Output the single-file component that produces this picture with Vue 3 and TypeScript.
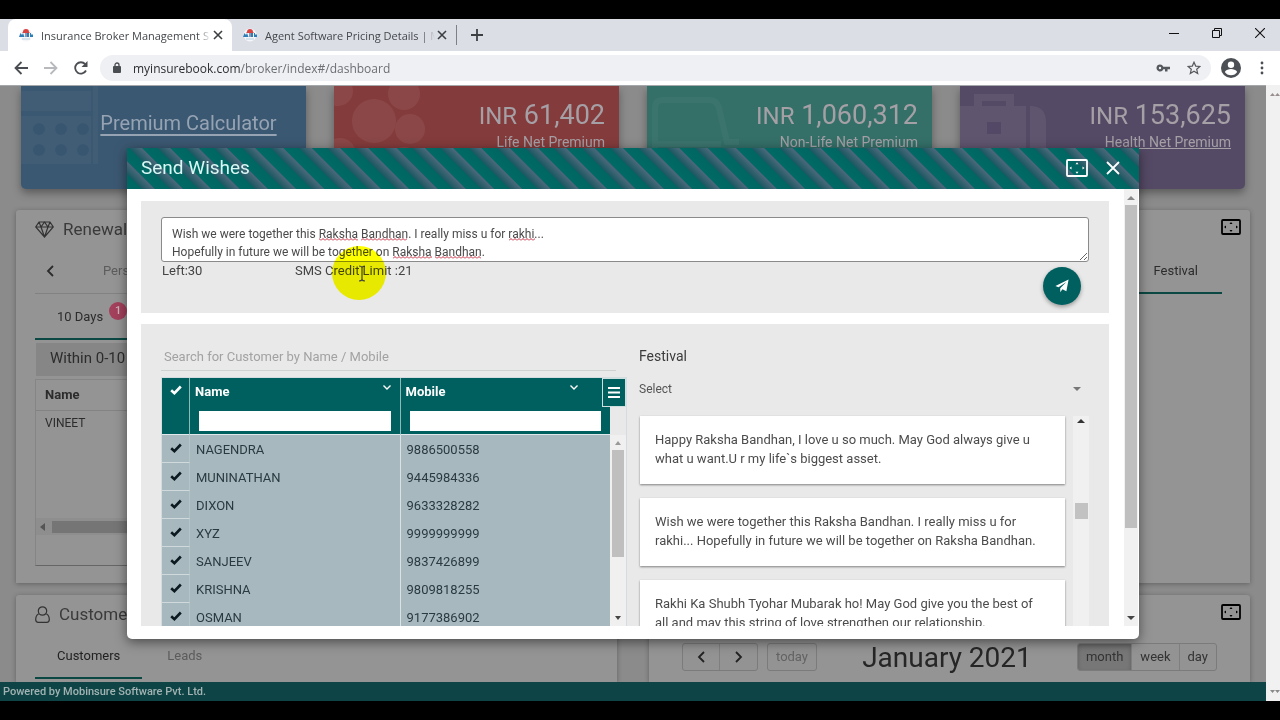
<script setup lang="ts">
import { ref } from 'vue'

interface Stat { kind: string; amount: string; label: string; link: boolean }
interface Customer { name: string; mobile: string }

const stats: Stat[] = [
  { kind: 'life', amount: '61,402', label: 'Life Net Premium', link: false },
  { kind: 'nonlife', amount: '1,060,312', label: 'Non-Life Net Premium', link: false },
  { kind: 'health', amount: '153,625', label: 'Health Net Premium', link: true },
]

const browserTabs = [
  { title: 'Insurance Broker Management S', active: true },
  { title: 'Agent Software Pricing Details | M', active: false },
]

const customers: Customer[] = [
  { name: 'NAGENDRA', mobile: '9886500558' },
  { name: 'MUNINATHAN', mobile: '9445984336' },
  { name: 'DIXON', mobile: '9633328282' },
  { name: 'XYZ', mobile: '9999999999' },
  { name: 'SANJEEV', mobile: '9837426899' },
  { name: 'KRISHNA', mobile: '9809818255' },
  { name: 'OSMAN', mobile: '9177386902' },
]

const wishes = [
  'Happy Raksha Bandhan, I love u so much. May God always give u what u want.U r my life`s biggest asset.',
  'Wish we were together this Raksha Bandhan. I really miss u for rakhi... Hopefully in future we will be together on Raksha Bandhan.',
  'Rakhi Ka Shubh Tyohar Mubarak ho! May God give you the best of all and may this string of love strengthen our relationship.',
]

const message = ref(
  'Wish we were together this Raksha Bandhan. I really miss u for rakhi...\nHopefully in future we will be together on Raksha Bandhan.',
)

// Words the spell checker flags: start, line top and width inside the text box
const misspelt = [
  { x: 158, y: 19, w: 39 },
  { x: 200, y: 19, w: 46 },
  { x: 348, y: 19, w: 26 },
  { x: 232, y: 37, w: 39 },
  { x: 274, y: 37, w: 46 },
]

const search = ref('')
const nameFilter = ref('')
const mobileFilter = ref('')
const festival = ref('Select')
</script>

<template>
  <div class="screen">
    <header class="tabstrip">
      <div v-for="tab in browserTabs" :key="tab.title" class="btab" :class="{ on: tab.active }">
        <svg class="favicon" viewBox="0 0 14 14">
          <circle cx="7" cy="7" r="6.5" fill="#f4f6fa" />
          <path d="M4 4a3 3 0 0 1 6 0l1 1H3z" fill="#d8433f" />
          <path d="M0 9l1.500-4 1.500 2 1-2 1.500 4zM8 5h2v4H8zM11 5h1v1.500h2V9h-3z" fill="#2f7fb5" />
          <path d="M6 5h2v4H6z" fill="#8b98b4" />
          <path d="M3 11h8" stroke="#b8d4e0" />
        </svg>
        <span class="btitle">{{ tab.title }}</span>
        <button class="plain" aria-label="Close tab">
          <svg width="10" height="10" viewBox="0 0 10 10"><path d="M1 1l8 8M9 1l-8 8" stroke="#3c4043" stroke-width="1.6" /></svg>
        </button>
      </div>
      <i class="tabsep"></i>
      <button class="plain newtab" aria-label="New tab">
        <svg width="12" height="12" viewBox="0 0 12 12"><path d="M6 0v12M0 6h12" stroke="#3c4043" stroke-width="1.8" /></svg>
      </button>
      <div class="winbtns">
        <button class="plain" aria-label="Minimize"><svg width="10" height="10" viewBox="0 0 10 10"><path d="M0 5.500h10" stroke="#111" /></svg></button>
        <button class="plain" aria-label="Restore"><svg width="10" height="10" viewBox="0 0 10 10" fill="none" stroke="#111"><path d="M.5 2.500h7v7h-7zM2.500 2.500v-2h7v7h-2" /></svg></button>
        <button class="plain" aria-label="Close window"><svg width="10" height="10" viewBox="0 0 10 10"><path d="M0 0l10 10M10 0L0 10" stroke="#111" stroke-width="1.100" /></svg></button>
      </div>
    </header>

    <nav class="toolbar">
      <button class="plain" aria-label="Back"><svg width="14" height="14" viewBox="0 0 14 14" fill="none" stroke="#4a4d51" stroke-width="1.800"><path d="M14 7H1.500M7.500 1l-6 6 6 6" /></svg></button>
      <button class="plain" aria-label="Forward"><svg width="14" height="14" viewBox="0 0 14 14" fill="none" stroke="#b7b9bc" stroke-width="1.800"><path d="M0 7h12.500M6.500 1l6 6-6 6" /></svg></button>
      <button class="plain" aria-label="Reload"><svg width="14" height="14" viewBox="0 0 14 14"><path d="M12 9.500A5.700 5.700 0 1 1 11.200 3.200" fill="none" stroke="#4a4d51" stroke-width="1.800" /><path d="M13.500 0v6h-6z" fill="#4a4d51" /></svg></button>
      <div class="omni">
        <svg width="8" height="12" viewBox="0 0 8 12"><rect y="4" width="8" height="7" rx="1" fill="#4a4d51" /><path d="M2 4.500V3a2 2 0 0 1 4 0v1.500" fill="none" stroke="#4a4d51" stroke-width="1.300" /></svg>
        <span class="url"><b>myinsurebook.com</b>/broker/index#/dashboard</span>
        <svg class="key" width="14" height="8" viewBox="0 0 14 8"><path d="M4 .5a3.500 3.500 0 1 0 3.300 4.700H9V7.500h2.500V5.200H14V2.800H7.300A3.500 3.500 0 0 0 4 .5zm0 2.300a1.200 1.200 0 1 1 0 2.400 1.200 1.200 0 0 1 0-2.400z" fill="#55585c" fill-rule="evenodd" /></svg>
        <svg width="14" height="14" viewBox="0 0 14 14"><path d="M7 1.200l1.700 3.900 4.200.4-3.200 2.800 1 4.200L7 10.300l-3.700 2.200 1-4.200L1.100 5.500l4.200-.4z" fill="none" stroke="#55585c" stroke-width="1.200" /></svg>
      </div>
      <svg class="avatar" width="20" height="20" viewBox="0 0 20 20"><circle cx="10" cy="10" r="10" fill="#4c4f53" /><circle cx="10" cy="6.800" r="3.200" fill="#fff" /><path d="M3.800 14c1.200-2.200 4-3 6.200-3s5 .8 6.200 3c-1.300 2-3.600 3.300-6.200 3.300S5.100 16 3.800 14z" fill="#fff" /></svg>
      <button class="plain" aria-label="Menu"><svg width="4" height="14" viewBox="0 0 4 14" fill="#4a4d51"><circle cx="2" cy="2" r="1.400" /><circle cx="2" cy="7" r="1.400" /><circle cx="2" cy="12" r="1.400" /></svg></button>
    </nav>

    <div class="viewport">
      <main class="page">
        <section class="stats">
          <article class="stat calc">
            <svg class="ghost" width="78" height="80" viewBox="0 0 78 80" fill="#fff">
              <path d="M0 5h70v20H0zM72 0h5v78h-5zM0 30h70v48H0z" opacity=".5" />
              <g fill="#23405a"><circle cx="18" cy="43" r="6" /><circle cx="40" cy="43" r="6" /><circle cx="62" cy="43" r="6" /><circle cx="18" cy="64" r="6" /><circle cx="40" cy="64" r="6" /><circle cx="62" cy="64" r="6" /></g>
            </svg>
            <a href="#calculator" class="calclink">Premium Calculator</a>
          </article>
          <article v-for="s in stats" :key="s.kind" class="stat" :class="s.kind">
            <svg v-if="s.kind === 'life'" class="ghost" width="92" height="80" viewBox="0 0 92 80" fill="#fff"><circle cx="40" cy="35" r="22" /><circle cx="70" cy="8" r="16" /><circle cx="76" cy="43" r="15" /><circle cx="4" cy="5" r="15" /><circle cx="6" cy="68" r="16" /><circle cx="70" cy="76" r="15" /></svg>
            <svg v-else-if="s.kind === 'nonlife'" class="ghost faint" width="92" height="80" viewBox="0 0 92 80" fill="none" stroke="#fff" stroke-width="6"><path d="M8 64V22q0-8 8-8h46q8 0 10 8l8 34h12M8 58h66" /></svg>
            <svg v-else class="ghost" width="92" height="80" viewBox="0 0 92 80"><path d="M14 20V8h40v12h12v60H0V20zm8-5v5h24v-5zM70 20q16 0 16 16v44H70z" fill="#fff" fill-rule="evenodd" /><path d="M27 36h14v12H27z" fill="#40355a" /></svg>
            <p class="amount"><small>INR</small> {{ s.amount }}</p>
            <a v-if="s.link" href="#health" class="caption">{{ s.label }}</a>
            <span v-else class="caption">{{ s.label }}</span>
          </article>
        </section>

        <section class="panels">
          <article class="panel tall">
            <h2>
              <svg width="19" height="17" viewBox="0 0 19 17" fill="none" stroke="#333" stroke-width="1.200"><path d="M4 1h11l3.300 5-8.800 10L.7 6zM.7 6h17.600M6 6l3.500 10L13 6M4 1l2 5 3.500-5L13 6l2-5" /></svg>
              Renewal
            </h2>
            <div class="carousel">
              <button class="plain" aria-label="Previous"><svg width="8" height="12" viewBox="0 0 8 12"><path d="M7 1L2 6l5 5" fill="none" stroke="#2b2b2b" stroke-width="1.800" /></svg></button>
              <span>Personal</span>
            </div>
            <div class="days"><span>10 Days</span><b>1</b></div>
            <p class="within">Within 0-10 Days</p>
            <div class="mini">
              <table>
                <thead><tr><th>Name</th></tr></thead>
                <tbody><tr><td>VINEET</td></tr></tbody>
              </table>
              <div class="hscroll"><svg width="5" height="8" viewBox="0 0 5 8"><path d="M5 0v8L0 4z" fill="#555" /></svg><i></i></div>
            </div>
          </article>

          <article class="panel tall right">
            <svg class="expand" width="20" height="16" viewBox="0 0 20 16"><rect x="1" y="1" width="18" height="14" rx="1" fill="none" stroke="#000" stroke-width="1.800" /><path d="M8.500 5L10 3l1.500 2zM8.500 11L10 13l1.500-2zM5 6.500L3 8l2 1.500zM15 6.500L17 8l-2 1.500z" /></svg>
            <div class="festtab"><span>Festival</span></div>
          </article>

          <article class="panel">
            <h2>
              <svg width="15" height="17" viewBox="0 0 15 17" fill="none" stroke="#333" stroke-width="1.200"><circle cx="7.500" cy="5" r="4.200" /><path d="M3.800 7.800C1.500 9 .7 11 .7 13.500c0 2 1 2.800 2.600 2.800h8.400c1.600 0 2.600-.8 2.600-2.800 0-2.500-.8-4.500-3.100-5.700" /></svg>
              Customers
            </h2>
            <div class="ctabs"><button class="plain on">Customers</button><button class="plain">Leads</button></div>
          </article>

          <article class="panel right">
            <svg class="expand" width="20" height="16" viewBox="0 0 20 16"><rect x="1" y="1" width="18" height="14" rx="1" fill="none" stroke="#000" stroke-width="1.800" /><path d="M8.500 5L10 3l1.500 2zM8.500 11L10 13l1.500-2zM5 6.500L3 8l2 1.500zM15 6.500L17 8l-2 1.500z" /></svg>
            <div class="calbar">
              <div class="leftset">
                <div class="group nav">
                  <button aria-label="Previous month"><svg width="8" height="12" viewBox="0 0 8 12"><path d="M7 1L2 6l5 5" fill="none" stroke="#222" stroke-width="1.800" /></svg></button>
                  <button aria-label="Next month"><svg width="8" height="12" viewBox="0 0 8 12"><path d="M1 1l5 5-5 5" fill="none" stroke="#222" stroke-width="1.800" /></svg></button>
                </div>
                <div class="group dim"><button>today</button></div>
              </div>
              <h3>January 2021</h3>
              <div class="group views"><button class="on">month</button><button>week</button><button>day</button></div>
            </div>
          </article>
        </section>

        <footer>Powered by Mobinsure Software Pvt. Ltd.</footer>

        <div class="overlay">
          <div class="modal" role="dialog" aria-labelledby="dlg-title">
            <header class="mhead">
              <h1 id="dlg-title">Send Wishes</h1>
              <button class="plain" aria-label="Full screen"><svg width="22" height="18" viewBox="0 0 22 18"><rect x="1" y="1" width="20" height="16" rx="1" fill="none" stroke="#fff" stroke-width="1.800" /><path d="M9.500 5.300L11 3.300l1.500 2zM9.500 12.700l1.500 2 1.500-2zM5.500 7.500L3.500 9l2 1.500zM16.500 7.500l2 1.500-2 1.500z" fill="#fff" /></svg></button>
              <button class="plain" aria-label="Close"><svg width="14" height="14" viewBox="0 0 14 14"><path d="M1 1l12 12M13 1L1 13" stroke="#fff" stroke-width="1.800" /></svg></button>
            </header>
            <div class="mbody">
              <div class="mcontent">
                <section class="box compose">
                  <div class="msgwrap">
                    <textarea v-model="message" rows="2" aria-label="Message" spellcheck="false"></textarea>
                    <svg class="squiggles" width="100%" height="100%">
                      <defs><pattern id="wave" width="4" height="3" patternUnits="userSpaceOnUse"><path d="M0 2.500L2 .5l2 2" fill="none" stroke="#c2283c" /></pattern></defs>
                      <rect v-for="(m, i) in misspelt" :key="i" :x="m.x" :y="m.y + 2" :width="m.w" height="3" fill="url(#wave)" />
                    </svg>
                  </div>
                  <div class="counts">
                    <span class="left">Left:30</span>
                    <span class="credit">SMS Credit Limit :21
                      <svg class="pointer" width="54" height="54" viewBox="0 0 54 54"><circle cx="27" cy="27" r="27" fill="#fdff00" /><path d="M27 20q2.500 0 3 1.500.5-1.500 3-1.500M27 35q2.500 0 3-1.500.5 1.500 3 1.500M30 21.500v12" fill="none" stroke="#444" stroke-width="1.200" /></svg>
                    </span>
                  </div>
                  <button class="send" aria-label="Send"><svg width="14" height="14" viewBox="0 0 16 15"><path d="M15.500 0L13 13.500 8.500 11.200 6 14.500V10L13 3 4 9 .5 7.500z" fill="#fff" /></svg></button>
                </section>

                <section class="box chooser">
                  <div class="people">
                    <input v-model="search" class="search" type="text" placeholder="Search for Customer by Name / Mobile" aria-label="Search for customer" />
                    <div class="grid">
                      <table class="gtable">
                        <colgroup><col class="c0" /><col /><col /></colgroup>
                        <thead>
                          <tr>
                            <th class="tick"><svg width="12" height="10" viewBox="0 0 12 10"><path d="M1.200 5.200L4.400 8.200 10.800 1.500" fill="none" stroke="#fff" stroke-width="2.600" /></svg></th>
                            <th>
                              <div class="thl">Name<svg width="8" height="5" viewBox="0 0 8 5"><path d="M.5.500L4 4 7.500.5" fill="none" stroke="#fff" stroke-width="1.400" /></svg></div>
                              <input v-model="nameFilter" type="text" aria-label="Filter name" />
                            </th>
                            <th>
                              <div class="thl wide">Mobile<svg width="8" height="5" viewBox="0 0 8 5"><path d="M.5.500L4 4 7.500.5" fill="none" stroke="#fff" stroke-width="1.400" /></svg></div>
                              <input v-model="mobileFilter" type="text" aria-label="Filter mobile" />
                            </th>
                          </tr>
                        </thead>
                        <tbody>
                          <tr v-for="c in customers" :key="c.mobile">
                            <td class="tick"><svg width="12" height="10" viewBox="0 0 12 10"><path d="M1.200 5.200L4.400 8.200 10.800 1.500" fill="none" stroke="#0c1a20" stroke-width="2.600" /></svg></td>
                            <td>{{ c.name }}</td>
                            <td>{{ c.mobile }}</td>
                          </tr>
                        </tbody>
                      </table>
                      <button class="gmenu" aria-label="Grid menu"><svg width="12" height="11" viewBox="0 0 12 11"><path d="M0 1h12M0 5.500h12M0 10h12" stroke="#fff" stroke-width="2" /></svg></button>
                      <div class="gscroll">
                        <svg width="6" height="4" viewBox="0 0 6 4"><path d="M0 4h6L3 0z" fill="#999" /></svg>
                        <i></i>
                        <svg class="down" width="6" height="4" viewBox="0 0 6 4"><path d="M0 0h6L3 4z" fill="#444" /></svg>
                      </div>
                    </div>
                  </div>

                  <div class="wishes">
                    <label for="festival">Festival</label>
                    <div class="selwrap">
                      <select id="festival" v-model="festival"><option>Select</option></select>
                      <svg width="8" height="4" viewBox="0 0 8 4"><path d="M0 0h8L4 4z" fill="#777" /></svg>
                    </div>
                    <div class="listwrap">
                      <ul><li v-for="w in wishes" :key="w">{{ w }}</li></ul>
                      <div class="lscroll">
                        <svg width="8" height="4" viewBox="0 0 8 4"><path d="M0 4h8L4 0z" fill="#333" /></svg>
                        <i></i>
                      </div>
                    </div>
                  </div>
                </section>
              </div>
              <div class="mscroll">
                <svg width="8" height="4" viewBox="0 0 8 4"><path d="M0 4h8L4 0z" fill="#888" /></svg>
                <i></i>
                <svg class="down" width="8" height="4" viewBox="0 0 8 4"><path d="M0 0h8L4 4z" fill="#444" /></svg>
              </div>
            </div>
          </div>
        </div>
      </main>
      <aside class="gutter">
        <svg width="10" height="4" viewBox="0 0 10 4"><path d="M0 4l2.500-3L5 4zM5 4l2.500-3L10 4z" fill="#9a8f8f" /></svg>
        <svg width="10" height="4" viewBox="0 0 10 4"><path d="M0 0l2.500 3L5 0zM5 0l2.500 3L10 0z" fill="#8a8a8a" /></svg>
      </aside>
    </div>
  </div>
</template>

<style>
body { margin: 0; background: #000; }
</style>

<style scoped>
* { box-sizing: border-box; }
.screen {
  height: 100vh; padding: 19px 0; background: #000; overflow: hidden;
  display: flex; flex-direction: column;
  font-family: Roboto, "Liberation Sans", sans-serif; color: #444;
}
button { font-family: inherit; cursor: pointer; }
.plain { border: 0; background: none; padding: 0; display: flex; align-items: center; color: inherit; }
h1, h2, h3, p, ul { margin: 0; padding: 0; font-weight: 400; }

/* browser chrome */
.tabstrip { flex: none; height: 32px; background: #dcdee6; display: flex; align-items: center; padding-left: 8px; font-family: "Open Sans", "Noto Sans", sans-serif; }
.btab { width: 224px; height: 32px; padding: 0 9px 0 11px; display: flex; align-items: center; gap: 8px; font-size: 11px; color: #44474b; }
.btab.on { background: #fff; border-radius: 8px 8px 0 0; }
.favicon { width: 14px; height: 14px; flex: none; }
.btitle { flex: 1; margin-right: -6px; white-space: nowrap; overflow: hidden; mask-image: linear-gradient(90deg, #000 92%, transparent); }
.tabsep { width: 1px; height: 20px; background: #7d8085; }
.newtab { margin-left: 14px; }
.winbtns { margin-left: auto; display: flex; gap: 33px; padding-right: 15px; margin-bottom: 4px; }
.toolbar { flex: none; height: 34px; background: #fff; display: flex; align-items: center; gap: 16px; padding: 0 16px 0 14px; }
.omni { flex: 1; height: 26px; border-radius: 13px; background: #eff0f4; display: flex; align-items: center; padding: 0 10px 0 13px; margin: 0 -6px 0 -4px; font-family: "Open Sans", "Noto Sans", sans-serif; }
.url { flex: 1; margin-left: 12px; font-size: 12px; color: #6b6e73; }
.url b { font-weight: 400; color: #2b2d30; }
.key { margin-right: 17px; }
.avatar { margin-right: 3px; }

/* dashboard */
.viewport { flex: 1; min-height: 0; display: flex; }
.page { flex: 1; min-width: 0; position: relative; overflow: hidden; background: #8b8b8b; display: flex; flex-direction: column; border-top: 1px solid #a5a8aa; }
.gutter { width: 14px; background: #f1f1f1; display: flex; flex-direction: column; justify-content: space-between; align-items: flex-end; padding: 7px 0; }
.stats { flex: none; display: grid; grid-template-columns: repeat(4, 1fr); gap: 28px; padding: 0 21px; height: 103px; }
.stat { position: relative; overflow: hidden; border-radius: 0 0 5px 5px; padding: 12px 14px; text-align: right; color: #a5a0a6; box-shadow: 0 4px 8px rgba(0, 0, 0, .35); }
.calc { background: #3b5872; text-align: center; padding: 23px 14px 0 64px; }
.life { background: #843b3b; }
.nonlife { background: #346f68; }
.health { background: #554a66; }
.ghost { position: absolute; left: 0; top: 0; opacity: .06; }
.faint { opacity: .03; }
.calclink { font-size: 20px; line-height: 28px; color: #96a3b3; text-underline-offset: 4px; }
.amount { font-size: 27px; line-height: 34px; }
.amount small { font-size: 24px; }
.caption { display: block; font-size: 14px; line-height: 18px; color: inherit; }
.panels { flex: 1; min-height: 0; display: grid; grid-template-columns: 1fr 1fr; grid-template-rows: 373px 1fr; gap: 12px 32px; padding: 21px 16px 0; }
.panel { background: #949494; border-radius: 3px 3px 0 0; box-shadow: 0 1px 5px rgba(0, 0, 0, .3); min-width: 0; overflow: hidden; padding: 0 0 0 19px; color: #2c2c2c; }
.panel h2 { display: flex; align-items: center; gap: 9px; height: 38px; font-size: 17px; color: #3a3a3a; }
.carousel { display: flex; align-items: center; gap: 49px; height: 46px; padding-left: 11px; border-bottom: 1px solid #828282; font-size: 13px; color: #5c5c5c; margin-right: 19px; }
.days { display: flex; align-items: center; gap: 6px; width: 109px; height: 46px; padding-left: 22px; border-bottom: 2px solid #0b4844; font-size: 13px; white-space: nowrap; }
.days b { flex: none; width: 18px; height: 18px; margin-bottom: 10px; border-radius: 9px; background: #a3405c; color: #c9b5bb; font-size: 11px; line-height: 18px; text-align: center; font-weight: 500; }
.within { height: 33px; margin: 3px 19px 3px 1px; padding-left: 14px; background: #868686; font-size: 15px; line-height: 30px; }
.mini { height: 187px; margin: 0 19px 0 0; border: 1px solid #858585; border-bottom-color: #666; display: flex; flex-direction: column; }
.mini table { border-collapse: collapse; width: 100%; font-size: 12px; }
.mini th, .mini td { height: 30px; padding: 0 9px; text-align: left; }
.mini th { font-weight: 700; font-size: 13px; border-bottom: 1px solid #838383; }
.mini td { height: 26px; }
.hscroll { height: 17px; margin-top: 82px; display: flex; align-items: center; gap: 7px; padding-left: 4px; background: #8e8e8e; }
.hscroll i { width: 300px; height: 12px; background: #757575; }
.right { position: relative; padding: 0; }
.expand { position: absolute; right: 9px; top: 9px; }
.festtab { margin: 38px 28px 0 19px; height: 46px; display: flex; justify-content: flex-end; align-items: center; padding-right: 24px; border-bottom: 2px solid #0b4844; font-size: 13px; }
.ctabs { display: flex; height: 46px; gap: 3px; }
.ctabs .plain { padding: 0 22px; font-size: 13px; color: #5c5c5c; border-bottom: 2px solid transparent; }
.ctabs .on { border-bottom-color: #0b4844; color: #222; }
.calbar { display: flex; justify-content: space-between; align-items: center; padding: 42px 33px 0; }
.leftset { display: flex; gap: 9px; }
.group { display: flex; border: 1px solid #7b7b7b; border-radius: 3px; background: #939393; overflow: hidden; }
.group button { height: 26px; border: 0; border-right: 1px solid #7f7f7f; background: none; padding: 0 8px; font-size: 13px; color: #333; display: flex; align-items: center; justify-content: center; }
.group button:last-child { border-right: 0; }
.nav button { width: 37px; }
.group svg { width: 16px; }
.group.dim button { color: #636363; }
.group .on { background: #777; box-shadow: inset 0 2px 4px rgba(0, 0, 0, .2); }
.calbar h3 { font-size: 28px; line-height: 36px; padding-top: 3px; color: #262626; }
footer { flex: none; position: relative; height: 19px; background: #0e4445; color: #a3b3b3; font-size: 11px; font-weight: 500; line-height: 20px; padding-left: 3px; }

/* dialog */
.overlay { position: absolute; inset: 0; padding: 62px 127px; display: flex; }
.modal { flex: 1; min-width: 0; display: flex; flex-direction: column; background: #fff; border-radius: 0 0 5px 5px; box-shadow: 0 3px 12px rgba(0, 0, 0, .5); }
.mhead {
  flex: none; height: 41px; display: flex; align-items: center; gap: 18px; padding: 0 19px 2px 14px; color: #fff;
  background: repeating-linear-gradient(45deg, #006a65 0, #006662 10px, #1c5962 11px, #4a687a 19px, #17616a 20px);
}
.mhead h1 { flex: 1; font-size: 19px; color: #d9f7f4; }
.mbody { flex: 1; min-height: 0; display: flex; padding: 0 1px 13px 14px; gap: 15px; }
.mcontent { flex: 1; min-width: 0; overflow: hidden; padding-top: 12px; display: flex; flex-direction: column; gap: 11px; }
.box { flex: none; background: #e9e9e9; padding: 0 20px; }
.compose { position: relative; height: 112px; padding-top: 16px; }
.msgwrap { position: relative; height: 45px; }
textarea { display: block; width: 100%; height: 45px; border: 1px solid #8a8a8a; border-radius: 3px; padding: 7px 10px 0; font: 12px/18px Roboto, "Liberation Sans", sans-serif; color: #4a4a4a; resize: vertical; overflow: hidden; background: #fff; }
.squiggles { position: absolute; inset: 0; pointer-events: none; }
.counts { display: flex; padding-left: 1px; font-size: 13px; line-height: 18px; }
.left { width: 133px; }
.credit { position: relative; }
.pointer { position: absolute; left: 37px; top: -16px; mix-blend-mode: multiply; }
.send { position: absolute; right: 28px; bottom: 8px; width: 38px; height: 38px; border: 0; border-radius: 50%; background: #006060; display: flex; align-items: center; justify-content: center; box-shadow: 0 2px 4px rgba(0, 0, 0, .35); padding: 0; }
.chooser { display: flex; gap: 12px; padding-top: 22px; height: 340px; }
.people { flex: 466 1 0; min-width: 0; }
.wishes { flex: 450 1 0; min-width: 0; font-size: 13px; display: flex; flex-direction: column; }
.search { display: block; width: calc(100% - 11px); height: 25px; border: 0; border-bottom: 1px solid #cfd2d2; background: none; padding: 0 3px 4px; font: 13px/20px Roboto, "Liberation Sans", sans-serif; color: #444; }
.search::placeholder { color: #a2a2a2; }
.grid { position: relative; display: flex; margin-top: 6px; border: 1px solid #d4dcdf; }
.gtable { flex: 1; table-layout: fixed; border-collapse: separate; border-spacing: 0; font-size: 13px; }
.c0 { width: 28px; }
.gtable th { height: 57px; background: #006060; color: #fff; padding: 4px 9px 0; text-align: left; vertical-align: top; border-right: 1px solid #8fb8b8; border-bottom: 1px solid #dfe8ea; }
.gtable .tick { padding: 0; text-align: center; }
.gtable th.tick { padding-top: 5px; }
.thl { display: flex; justify-content: space-between; height: 20px; margin: 0 0 9px -4px; line-height: 20px; font-size: 13px; font-weight: 700; }
.thl svg { margin-top: 3px; }
.thl.wide svg { margin-right: 23px; }
.gtable th input { display: block; width: 100%; height: 20px; border: 0; border-radius: 0; padding: 0 4px; background: #fff; }
.gtable td { height: 28px; padding: 0 6px; color: #2b3a40; background: #a7b9bf; }
.gtable td:nth-child(2) { border-right: 1px solid #d9e2e5; }
.gtable td.tick { border-bottom: 1px solid #d0dadd; border-right: 1px solid #b5c4c9; }
.gtable th:last-child { border-right: 0; }
.gmenu { position: absolute; right: 0; top: 0; width: 24px; height: 29px; background: #006060; border: 1px solid #cfe0e0; padding: 0; display: flex; align-items: center; justify-content: center; }
.gscroll { width: 16px; margin-top: 57px; height: 191px; background: #f0f0f0; display: flex; flex-direction: column; align-items: center; padding: 6px 2px; }
.gscroll i { width: 12px; height: 107px; margin-top: 5px; background: #bfbfbf; }
.down { margin-top: auto; }
.wishes label { color: #3c3c3c; line-height: 20px; font-size: 14px; }
.selwrap { position: relative; display: flex; align-items: center; height: 24px; margin-top: 11px; }
.selwrap select { appearance: none; width: 100%; height: 24px; border: 0; padding: 0; background: none; font: 12px Roboto, "Liberation Sans", sans-serif; color: #555; }
.selwrap svg { position: absolute; right: 8px; }
.listwrap { display: flex; margin-top: 15px; }
ul { flex: 1; min-width: 0; list-style: none; display: flex; flex-direction: column; gap: 14px; padding-left: 1px; }
li { background: #fff; height: 68px; padding: 14px 20px 0 15px; line-height: 19px; font-size: 13px; color: #4c4c4c; box-shadow: 0 1px 2px rgba(0, 0, 0, .45); }
.lscroll { width: 16px; margin-left: 8px; background: #f0f0f0; display: flex; flex-direction: column; align-items: center; padding: 3px 0; }
.lscroll i { width: 13px; height: 16px; background: #c2c2c2; margin-top: 80px; }
.lscroll svg, .gscroll svg, .mscroll svg { flex: none; }
.mscroll { width: 14px; background: #f1f1f1; display: flex; flex-direction: column; align-items: center; padding: 7px 0 6px; }
.mscroll i { width: 12px; height: 323px; margin-top: 5px; background: #bfbfbf; }
</style>
